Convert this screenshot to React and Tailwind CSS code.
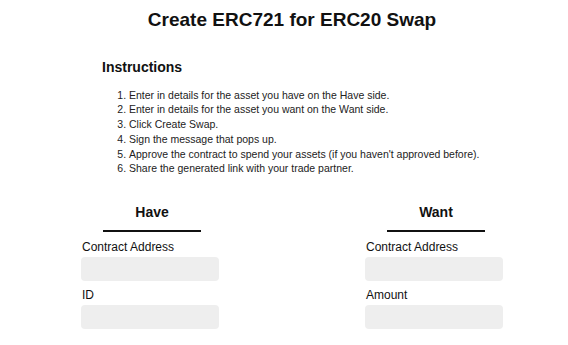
import { useState } from 'react';

const steps = [
  'Enter in details for the asset you have on the Have side.',
  'Enter in details for the asset you want on the Want side.',
  'Click Create Swap.',
  'Sign the message that pops up.',
  "Approve the contract to spend your assets (if you haven't approved before).",
  'Share the generated link with your trade partner.',
];

function Field({ label, value, onChange }) {
  return (
    <div>
      <label className="block pl-px text-[12px] leading-[14px] text-[#111]">{label}</label>
      <input
        value={value}
        onChange={(e) => onChange(e.target.value)}
        className="mt-[3px] block h-[24px] w-full rounded-[4px] bg-[#eeeeee] px-2 text-[12px] outline-none"
      />
    </div>
  );
}

function Side({ title, fields, values, setValue }) {
  return (
    <div>
      <div className="ml-[22px] w-[98px]">
        <h2 className="text-center text-[14px] font-bold leading-[18px] text-[#111]">{title}</h2>
        <div className="mt-[9px] h-[2px] bg-[#111]"></div>
      </div>
      <div className="mt-[8px] flex flex-col gap-[7px]">
        {fields.map((f) => (
          <Field key={f} label={f} value={values[f] || ''} onChange={(v) => setValue(f, v)} />
        ))}
      </div>
    </div>
  );
}

export default function App() {
  const [have, setHave] = useState({});
  const [want, setWant] = useState({});

  return (
    <div className="min-h-[345px] w-full bg-white pl-4 pt-[9px] text-[#111]" style={{ fontFamily: '"Liberation Sans", Arial, sans-serif' }}>
      <h1 className="text-center text-[19px] font-bold leading-[22px]">Create ERC721 for ERC20 Swap</h1>

      {/* Instructions */}
      <div className="ml-[86px] mt-[27px]">
        <h3 className="text-[14px] font-bold leading-[18px]">Instructions</h3>
        <ol className="mt-[11.5px] list-decimal pl-[27px] text-[10.5px] leading-[14.8px] text-[#222]">
          {steps.map((s) => (
            <li key={s}>{s}</li>
          ))}
        </ol>
      </div>

      {/* Have / Want */}
      <div className="mx-auto mt-[27px] grid w-[422px] grid-cols-[138px_138px] gap-x-[146px]">
        <Side
          title="Have"
          fields={['Contract Address', 'ID']}
          values={have}
          setValue={(k, v) => setHave({ ...have, [k]: v })}
        />
        <Side
          title="Want"
          fields={['Contract Address', 'Amount']}
          values={want}
          setValue={(k, v) => setWant({ ...want, [k]: v })}
        />
      </div>
    </div>
  );
}
